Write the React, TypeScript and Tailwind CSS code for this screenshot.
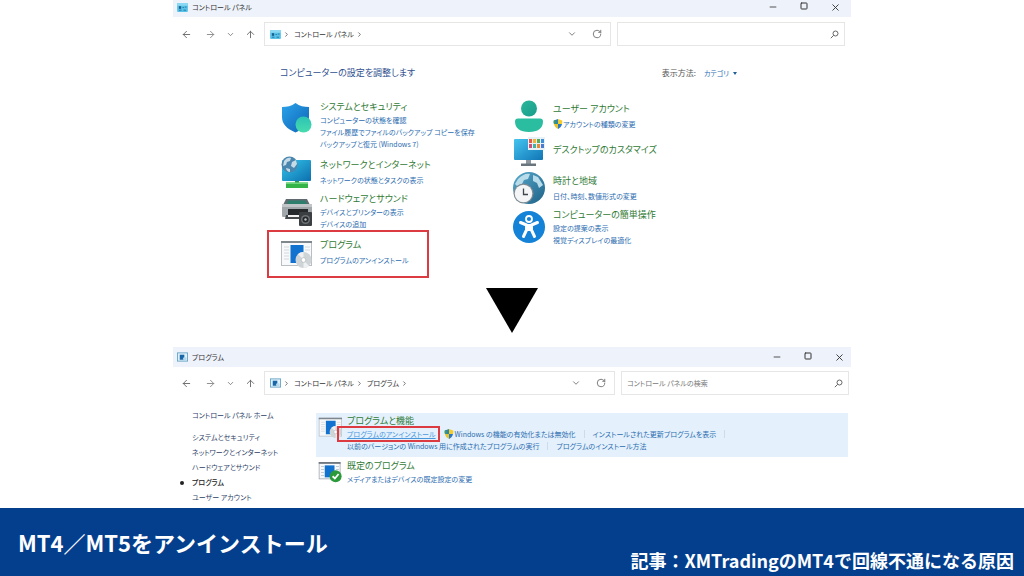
import type { ReactNode } from 'react';
import { ArrowLeft, ArrowRight, ArrowUp, ChevronDown, ChevronRight, Minus, RotateCw, Square, X } from 'lucide-react';
import clsx from 'clsx';

function ControlPanelGlyph() {
  return (
    <svg viewBox="0 0 12 10" className="h-[9px] w-[11px] shrink-0">
      <rect width="12" height="10" rx="1" fill="#5cc3e8" />
      <path d="M0 0h12v3H0z" fill="#8bd8f2" />
      <path d="M2 3.5h2.5v3H2z" fill="#17618f" />
      <path d="M6 5h1.5M2 8h3M7 8h3M8.500 4.500h2" stroke="#1b76a8" strokeWidth="1" />
    </svg>
  );
}

function ProgramsGlyph() {
  return (
    <svg viewBox="0 0 12 10" className="h-[10px] w-[11px] shrink-0">
      <rect x=".5" y=".5" width="11" height="9" fill="#dff1fb" stroke="#6aa5c6" />
      <rect x="3" y="2.500" width="5" height="5.500" fill="#1766a8" />
      <circle cx="8.500" cy="7" r="2" fill="#b9d9ea" />
    </svg>
  );
}

function SearchGlyph() {
  return (
    <svg viewBox="0 0 9 9" className="size-[9px] shrink-0" fill="none" stroke="#666">
      <circle cx="5.500" cy="3.500" r="2.500" />
      <path d="M3.700 5.300.800 8.200" />
    </svg>
  );
}

function UacShield() {
  return (
    <svg viewBox="0 0 10 10" className="size-[10px] shrink-0">
      <path d="M5 0 .800 1.500C.600 3 .700 4 1 5h4z" fill="#2b86b5" />
      <path d="M5 0l4.200 1.500C9.400 3 9.300 4 9 5H5z" fill="#f3cd2f" />
      <path d="M5 5h4C8.500 7.300 7.300 9 5 10z" fill="#2b78c5" />
      <path d="M5 5H1C1.500 7.300 2.700 9 5 10z" fill="#e9c52c" />
      <path d="M.800 1.500C.600 3 .700 4 1 5h1.500V1z" fill="#4a9a52" />
    </svg>
  );
}

function SecurityIcon() {
  return (
    <svg viewBox="0 0 32 32" className="mt-0.5 size-8 shrink-0">
      <defs>
        <linearGradient id="shield" x1="0" y1="0" x2="1" y2="1">
          <stop offset="0" stopColor="#2aa3ea" />
          <stop offset="1" stopColor="#0f63b5" />
        </linearGradient>
        <linearGradient id="orb" x1="0" y1="0" x2="0" y2="1">
          <stop offset="0" stopColor="#2cc3b4" />
          <stop offset="1" stopColor="#48dcae" />
        </linearGradient>
      </defs>
      <path d="M15.500 1C11.500 4 7 5 2 5v10c0 7 5 12 13.500 15.500C24 27 29 22 29 15V5C24 5 19.500 4 15.500 1z" fill="url(#shield)" />
      <circle cx="23.500" cy="22.500" r="8" fill="url(#orb)" />
    </svg>
  );
}

function NetworkIcon() {
  return (
    <svg viewBox="0 0 32 32" className="size-8 shrink-0">
      <defs>
        <linearGradient id="net" x1="0" y1="0" x2="1" y2="1">
          <stop offset="0" stopColor="#35c5ea" />
          <stop offset="1" stopColor="#0c6fae" />
        </linearGradient>
      </defs>
      <rect x="2" y="4" width="29" height="21" rx="1" fill="url(#net)" />
      <path d="M15 25h4v3h-4z" fill="#2d9b4b" />
      <path d="M6 26.500h22V32H6z" fill="#35b44a" />
      <path d="M6 26.500h22V28H6z" fill="#6ed77b" />
      <circle cx="9.500" cy="8.500" r="8" fill="#4a86ad" />
      <path d="M4 5c2-3 5-4 7-3l-1 3-3 1-1 3-3 1zM12 6l4-2 1 4-3 4-3-2zM6 12l4 1v3c-2 0-4-2-4-4z" fill="#c5dce8" />
    </svg>
  );
}

function PrinterIcon() {
  return (
    <svg viewBox="0 0 32 32" className="size-8 shrink-0">
      <path d="M6 4h21l3 6H3z" fill="#606a70" />
      <path d="M8 5.500h17l2 3.500H7z" fill="#2e7e6d" />
      <rect x="2" y="9" width="30" height="13" rx="1" fill="#a1a7ab" />
      <path d="M2 9h30v3H2z" fill="#c1c5c8" />
      <path d="M8 14h20v6H8z" fill="#25292c" />
      <path d="M6 20h17v4H5z" fill="#45494c" />
      <path d="M8 20h14v2H8z" fill="#f2f2f2" />
      <rect x="19" y="17" width="13" height="14" rx="1" fill="#3c3f42" />
      <circle cx="25.500" cy="24.500" r="4.500" fill="#6e7276" />
      <circle cx="25.500" cy="24.500" r="3" fill="#25282a" />
      <circle cx="25.500" cy="24.500" r="1.200" fill="#b9bcbf" />
    </svg>
  );
}

function ProgramsIcon({ className = 'size-8' }: { className?: string }) {
  return (
    <svg viewBox="0 0 32 32" className={clsx('shrink-0', className)}>
      <rect x="1.500" y="5.500" width="30" height="24" fill="#f8f9fa" stroke="#b8bec4" />
      <path d="M1 5h31v2H1z" fill="#7f878e" />
      <path d="M4 11h5M4 14h5M4 17h5M4 20h5M4 23h5M25 11h5M25 14h5" stroke="#d3d8dc" />
      <rect x="10.500" y="9" width="13" height="18" fill="#1173cf" />
      <circle cx="23.500" cy="24" r="8" fill="#cfd4d7" />
      <path d="M23.500 24 18 18a8 8 0 0 1 5.500-2zM23.500 24l5.500 6a8 8 0 0 1-5.500 2z" fill="#eef0f1" />
      <circle cx="23.500" cy="24" r="2.400" fill="#fff" stroke="#b4babd" strokeWidth=".8" />
    </svg>
  );
}

function DefaultProgramsIcon() {
  return (
    <svg viewBox="0 0 32 32" className="size-6 shrink-0">
      <rect x="1.500" y="4.500" width="28" height="22" fill="#f8f9fa" stroke="#9ba3aa" />
      <path d="M1 4h29v2.500H1z" fill="#6f7880" />
      <path d="M4 10h4M4 14h4M4 18h4M4 22h4M24 10h4M24 14h4" stroke="#aeb9c2" />
      <rect x="9" y="8.500" width="13" height="16" fill="#1173cf" />
      <circle cx="23.500" cy="23" r="8" fill="#2c9a3b" />
      <path d="m19.500 23 3 3 5-6" fill="none" stroke="#fff" strokeWidth="2.400" />
    </svg>
  );
}

function UserIcon() {
  return (
    <svg viewBox="0 0 32 32" className="size-8 shrink-0">
      <defs>
        <linearGradient id="user" x1="0" y1="0" x2="1" y2="1">
          <stop offset="0" stopColor="#2bb79c" />
          <stop offset="1" stopColor="#1a9c8b" />
        </linearGradient>
      </defs>
      <circle cx="16" cy="8.500" r="8" fill="url(#user)" />
      <path d="M5 18.500h22a3 3 0 0 1 3 3C30 28 25 32 16 32S2 28 2 21.500a3 3 0 0 1 3-3z" fill="#2bbd9f" />
    </svg>
  );
}

const tiles = ['#e25b4c', '#f2b13a', '#5dab4d', '#3f8fd8', '#d24f7d', '#3fb3a5', '#e88a34', '#4b7bd0'];

function DesktopIcon() {
  return (
    <svg viewBox="0 0 32 32" className="size-8 shrink-0">
      <defs>
        <linearGradient id="desk" x1="0" y1="0" x2="1" y2="1">
          <stop offset="0" stopColor="#45c4ef" />
          <stop offset="1" stopColor="#1075b5" />
        </linearGradient>
      </defs>
      <rect x="1" y="5" width="29" height="21" rx="1" fill="url(#desk)" />
      <path d="M13 26h5v4h-5z" fill="#8c979f" />
      <path d="M8 29.500h15V32H8z" fill="#69757d" />
      <rect x="15" y="3" width="17" height="13" fill="#e8f1f6" />
      {tiles.map((fill, i) => (
        <rect key={fill} x={16 + (i % 4) * 4} y={5 + Math.floor(i / 4) * 5} width="3" height="4" fill={fill} />
      ))}
    </svg>
  );
}

function ClockIcon() {
  return (
    <svg viewBox="0 0 32 32" className="size-8 shrink-0">
      <defs>
        <linearGradient id="globe" x1="0" y1="0" x2="1" y2="1">
          <stop offset="0" stopColor="#58aacd" />
          <stop offset="1" stopColor="#1e6187" />
        </linearGradient>
      </defs>
      <circle cx="16" cy="16" r="16" fill="url(#globe)" />
      <path d="M5 7c4-4 8-6 12-5l-2 5-4 1-2 4-5 2-2-2zM20 3l5 2 5 8-4 3-2-5-4-2z" fill="#b9dcea" />
      <circle cx="10.500" cy="21.500" r="10" fill="#7e8b93" />
      <circle cx="10.500" cy="21.500" r="8.800" fill="#f4f5f6" />
      <path d="M10.500 16.500v6h4.500" fill="none" stroke="#3d464c" strokeWidth="1.300" />
    </svg>
  );
}

function AccessIcon() {
  return (
    <svg viewBox="0 0 32 32" className="size-8 shrink-0">
      <circle cx="16" cy="16" r="16" fill="#1482d6" />
      <circle cx="16" cy="8" r="3" fill="none" stroke="#fff" strokeWidth="1.800" />
      <path
        d="M7.500 11.500l6 2.500v5L10.500 25.500M24.500 11.500l-6 2.500v5l3 6.500"
        fill="none"
        stroke="#fff"
        strokeWidth="3"
        strokeLinecap="round"
        strokeLinejoin="round"
      />
      <path d="M12.500 13h7v7h-7z" fill="#fff" />
    </svg>
  );
}

interface Category {
  title: string;
  links: string[];
  icon: ReactNode;
  shield?: boolean;
  className?: string;
}

const leftCategories: Category[] = [
  {
    title: 'システムとセキュリティ',
    links: ['コンピューターの状態を確認', 'ファイル履歴でファイルのバックアップ コピーを保存', 'バックアップと復元 (Windows 7)'],
    icon: <SecurityIcon />,
    className: 'items-start',
  },
  {
    title: 'ネットワークとインターネット',
    links: ['ネットワークの状態とタスクの表示'],
    icon: <NetworkIcon />,
    className: 'mt-1.5 items-center',
  },
  {
    title: 'ハードウェアとサウンド',
    links: ['デバイスとプリンターの表示', 'デバイスの追加'],
    icon: <PrinterIcon />,
    className: 'mt-1 items-center',
  },
  {
    title: 'プログラム',
    links: ['プログラムのアンインストール'],
    icon: <ProgramsIcon />,
    className: '-ml-[13px] w-[162px] items-center border-2 border-[#dc3c41] pt-1 pr-2 pb-2 pl-[11px]',
  },
];

const rightCategories: Category[] = [
  { title: 'ユーザー アカウント', links: ['アカウントの種類の変更'], icon: <UserIcon />, shield: true, className: 'items-center' },
  { title: 'デスクトップのカスタマイズ', links: [], icon: <DesktopIcon />, className: 'mt-0.5 items-center' },
  { title: '時計と地域', links: ['日付、時刻、数値形式の変更'], icon: <ClockIcon />, className: 'mt-1.5 items-center' },
  { title: 'コンピューターの簡単操作', links: ['設定の提案の表示', '視覚ディスプレイの最適化'], icon: <AccessIcon />, className: 'mt-1 items-center' },
];

function CategoryItem({ title, links, icon, shield, className }: Category) {
  return (
    <li className={clsx('flex gap-2', className)}>
      {icon}
      <div className={clsx('flex flex-col items-start whitespace-nowrap', links.length === 1 && 'gap-0.5')}>
        <a href="#" className="text-[9px] leading-[14px] text-[#2f7a35]">{title}</a>
        {links.length > 0 && (
          <ul>
            {links.map((link) => (
              <li key={link} className="flex items-center text-[7px] leading-3 text-[#2b6cb0]">
                {shield && <UacShield />}
                <a href="#">{link}</a>
              </li>
            ))}
          </ul>
        )}
      </div>
    </li>
  );
}

function TitleBar({ title, icon, className }: { title: string; icon: ReactNode; className?: string }) {
  return (
    <header className={clsx('flex items-center bg-[#eef2fa] pl-1 text-[#333]', className)}>
      {icon}
      <h1 className="ml-1 flex-1 text-[7px] leading-3">{title}</h1>
      <div className="flex gap-[7px]">
        <button type="button" aria-label="最小化" className="flex w-6 justify-center">
          <Minus size={10} />
        </button>
        <button type="button" aria-label="最大化" className="flex w-6 justify-center">
          <Square size={8} strokeWidth={3} />
        </button>
        <button type="button" aria-label="閉じる" className="flex w-6 justify-center">
          <X size={11} />
        </button>
      </div>
    </header>
  );
}

interface NavBarProps {
  icon: ReactNode;
  path: string[];
  placeholder?: string;
  className?: string;
}

function NavBar({ icon, path, placeholder, className }: NavBarProps) {
  return (
    <nav className={clsx('flex items-center pl-[3px] text-[#666]', className)}>
      <button type="button" aria-label="戻る" className="mr-1 flex w-5 justify-center">
        <ArrowLeft size={11} />
      </button>
      <button type="button" aria-label="進む" className="flex w-5 justify-center text-[#888]">
        <ArrowRight size={11} />
      </button>
      <button type="button" aria-label="履歴" className="flex w-5 justify-center">
        <ChevronDown size={9} />
      </button>
      <button type="button" aria-label="上へ" className="mr-1 flex w-5 justify-center">
        <ArrowUp size={11} />
      </button>
      <div className="flex h-6 flex-1 items-center border border-[#e6e6e6] bg-white pl-[5px]">
        {icon}
        <ChevronRight size={7} strokeWidth={3} className="ml-0.5" />
        {path.map((name) => (
          <span key={name} className="flex items-center">
            <a href="#" className="ml-1 text-[7px] leading-3 whitespace-nowrap text-[#333]">{name}</a>
            <ChevronRight size={7} strokeWidth={3} className="ml-0.5" />
          </span>
        ))}
        <button type="button" aria-label="場所の一覧" className="ml-auto flex w-6 justify-center">
          <ChevronDown size={10} />
        </button>
        <button type="button" aria-label="更新" className="flex w-[26px] justify-center">
          <RotateCw size={10} />
        </button>
      </div>
      <label className="ml-1.5 flex h-6 w-[228px] shrink-0 items-center border border-[#e6e6e6] bg-white pr-[5px] pl-[5px]">
        <input
          type="text"
          aria-label="コントロール パネルの検索"
          placeholder={placeholder}
          className="min-w-0 flex-1 bg-transparent text-[7px] leading-3 outline-none placeholder:text-[#777]"
        />
        <SearchGlyph />
      </label>
    </nav>
  );
}

function Divider() {
  return <span className="mx-2 h-2 w-px bg-[#cddcea]" />;
}

const sidebarLinks = ['システムとセキュリティ', 'ネットワークとインターネット', 'ハードウェアとサウンド', 'プログラム', 'ユーザー アカウント'];

function ControlPanelWindow() {
  return (
    <section>
      <TitleBar title="コントロール パネル" icon={<ControlPanelGlyph />} className="pr-1 pt-px pb-1" />
      <NavBar icon={<ControlPanelGlyph />} path={['コントロール パネル']} className="mt-[5px] pr-1.5" />
      <div className="mt-5 flex items-center justify-between pr-[114px] pl-[107px]">
        <h2 className="text-[9px] leading-[14px] text-[#2f4f8f]">コンピューターの設定を調整します</h2>
        <div className="flex items-center gap-2 text-[8px] leading-3 text-[#555]">
          <span>表示方法:</span>
          <button type="button" className="flex items-center gap-1 text-[7px] text-[#1f6fb5]">
            カテゴリ
            <svg viewBox="0 0 4 3" className="h-[3px] w-1">
              <path d="M0 0h4L2 3z" fill="#1f5f95" />
            </svg>
          </button>
        </div>
      </div>
      <div className="mt-5 grid grid-cols-[233px_1fr] pl-[107px]">
        <ul>
          {leftCategories.map((category) => (
            <CategoryItem key={category.title} {...category} />
          ))}
        </ul>
        <ul>
          {rightCategories.map((category) => (
            <CategoryItem key={category.title} {...category} />
          ))}
        </ul>
      </div>
    </section>
  );
}

function ProgramsWindow() {
  return (
    <section className="mt-[14px]">
      <TitleBar title="プログラム" icon={<ProgramsGlyph />} className="py-1" />
      <NavBar
        icon={<ProgramsGlyph />}
        path={['コントロール パネル', 'プログラム']}
        placeholder="コントロール パネルの検索"
        className="mt-1 pr-0.5"
      />
      <div className="flex pt-[13px]">
        <aside className="w-[143px] pl-[19px] text-[7px] leading-[15px] text-[#2c3e66]">
          <a href="#">コントロール パネル ホーム</a>
          <ul className="mt-[7px]">
            {sidebarLinks.map((name) => (
              <li key={name} className="relative">
                {name === 'プログラム' && <span className="absolute top-1.5 -left-3 size-1 rounded-full bg-[#222]" />}
                <a href="#" className={clsx(name === 'プログラム' && 'font-medium text-[#222]')}>{name}</a>
              </li>
            ))}
          </ul>
        </aside>
        <div className="flex-1 pt-[5px] pr-[3px] text-[7px] leading-3 whitespace-nowrap text-[#2b6cb0]">
          <div className="flex gap-1 bg-[#e4f1fc] pt-px pb-[5px] pl-0.5">
            <ProgramsIcon className="size-6" />
            <div className="ml-px">
              <a href="#" className="block text-[9px] leading-[14px] text-[#2f7a35]">プログラムと機能</a>
              <div className="flex items-center">
                <span className="relative">
                  <a href="#" className="text-[#4a97dc] underline">プログラムのアンインストール</a>
                  <span className="absolute -inset-y-0.5 -right-1 -left-2.5 border-2 border-[#dc3c41]" />
                </span>
                <span className="ml-2 flex items-center">
                  <UacShield />
                  <a href="#" className="ml-px">Windows の機能の有効化または無効化</a>
                </span>
                <Divider />
                <a href="#">インストールされた更新プログラムを表示</a>
                <Divider />
              </div>
              <div className="flex items-center">
                <a href="#">以前のバージョンの Windows 用に作成されたプログラムの実行</a>
                <Divider />
                <a href="#">プログラムのインストール方法</a>
              </div>
            </div>
          </div>
          <div className="mt-0.5 flex gap-1 pl-0.5">
            <DefaultProgramsIcon />
            <div className="ml-px">
              <a href="#" className="block text-[9px] leading-[14px] text-[#2f7a35]">既定のプログラム</a>
              <a href="#" className="block">メディアまたはデバイスの既定設定の変更</a>
            </div>
          </div>
        </div>
      </div>
    </section>
  );
}

export default function App() {
  return (
    <div className="flex min-h-screen flex-col bg-white font-['Noto_Sans_CJK_JP','Noto_Sans',sans-serif]">
      <main className="mx-auto w-full max-w-[678px] [font-feature-settings:'palt']">
        <ControlPanelWindow />
        <svg viewBox="0 0 52 45" className="mx-auto mt-[10px] h-[45px] w-[52px]">
          <path d="M0 0h52L26 45z" fill="#000" />
        </svg>
        <ProgramsWindow />
      </main>
      <footer className="mt-auto flex items-end justify-between bg-[#043f8e] px-[10px] pt-[18px] pb-1 font-bold text-white">
        <p className="mb-[14px] ml-2 text-[22px] leading-8">MT4／MT5をアンインストール</p>
        <p className="text-[18px] leading-6">記事：XMTradingのMT4で回線不通になる原因</p>
      </footer>
    </div>
  );
}
